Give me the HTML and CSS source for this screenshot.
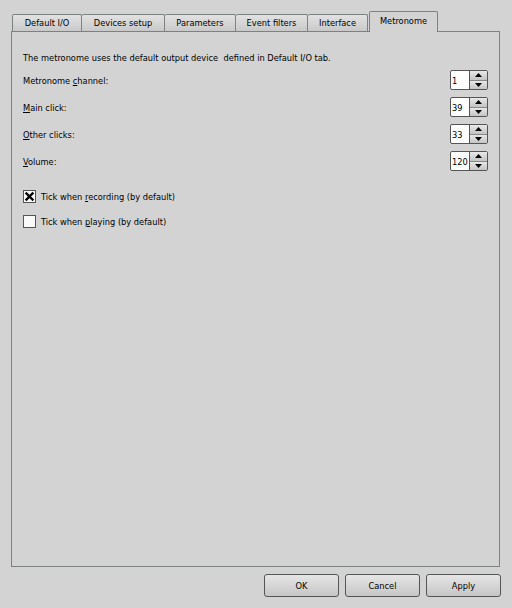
FILE: index.html
```html
<!DOCTYPE html>
<html>
<head>
<meta charset="utf-8">
<link rel="stylesheet" href="styles.css">
</head>
<body>
<div class="dialog">
  <div class="tabbar">
    <div class="tab t1">Default I/O</div>
    <div class="tab t2">Devices setup</div>
    <div class="tab t3">Parameters</div>
    <div class="tab t4">Event filters</div>
    <div class="tab t5">Interface</div>
    <div class="tab active t6">Metronome</div>
  </div>
  <div class="panel">
    <div class="info">The metronome uses the default output device&nbsp; defined in Default I/O tab.</div>
    <div class="row">
      <span class="lbl">Metronome <u>c</u>hannel:</span>
      <div class="spin"><div class="field">1</div><div class="btns"><div class="up"><svg width="7" height="4" viewBox="0 0 7 4"><path d="M0 4 L3.5 0 L7 4Z" fill="#000"/></svg></div><div class="down"><svg width="7" height="4" viewBox="0 0 7 4"><path d="M0 0 L3.5 4 L7 0Z" fill="#000"/></svg></div></div></div>
    </div>
    <div class="row">
      <span class="lbl"><u>M</u>ain click:</span>
      <div class="spin"><div class="field">39</div><div class="btns"><div class="up"><svg width="7" height="4" viewBox="0 0 7 4"><path d="M0 4 L3.5 0 L7 4Z" fill="#000"/></svg></div><div class="down"><svg width="7" height="4" viewBox="0 0 7 4"><path d="M0 0 L3.5 4 L7 0Z" fill="#000"/></svg></div></div></div>
    </div>
    <div class="row">
      <span class="lbl"><u>O</u>ther clicks:</span>
      <div class="spin"><div class="field">33</div><div class="btns"><div class="up"><svg width="7" height="4" viewBox="0 0 7 4"><path d="M0 4 L3.5 0 L7 4Z" fill="#000"/></svg></div><div class="down"><svg width="7" height="4" viewBox="0 0 7 4"><path d="M0 0 L3.5 4 L7 0Z" fill="#000"/></svg></div></div></div>
    </div>
    <div class="row">
      <span class="lbl"><u>V</u>olume:</span>
      <div class="spin"><div class="field">120</div><div class="btns"><div class="up"><svg width="7" height="4" viewBox="0 0 7 4"><path d="M0 4 L3.5 0 L7 4Z" fill="#000"/></svg></div><div class="down"><svg width="7" height="4" viewBox="0 0 7 4"><path d="M0 0 L3.5 4 L7 0Z" fill="#000"/></svg></div></div></div>
    </div>
    <div class="checks">
      <div class="check"><span class="box"><svg width="11" height="11" viewBox="0 0 11 11"><path d="M2.5 2.5 L8.5 8.5 M8.5 2.5 L2.5 8.5" stroke="#000" stroke-width="2.4" stroke-linecap="square"/></svg></span><span>Tick when <u>r</u>ecording (by default)</span></div>
      <div class="check"><span class="box"></span><span>Tick when <u>p</u>laying (by default)</span></div>
    </div>
  </div>
  <div class="buttons">
    <div class="btn">OK</div>
    <div class="btn">Cancel</div>
    <div class="btn">Apply</div>
  </div>
</div>
</body>
</html>
```
FILE: styles.css
```css
html, body {
  margin: 0;
  padding: 0;
  background: #d3d3d3;
}
body {
  width: 512px;
  height: 608px;
  overflow: hidden;
  font-family: "DejaVu Sans Condensed", "DejaVu Sans", sans-serif;
  font-size: 9.2px;
  color: #000;
}
.dialog {
  padding: 11px 0 0 11px;
}
.tabbar {
  display: flex;
  align-items: flex-end;
  height: 20px;
  padding-left: 1px;
  position: relative;
  z-index: 2;
}
.tab {
  height: 17px;
  box-sizing: border-box;
  border: 1px solid #7d8181;
  border-bottom: none;
  border-left: none;
  background: linear-gradient(#e2e2e2, #c9c9c9);
  display: flex;
  align-items: center;
  justify-content: center;
  padding-bottom: 2px;
  border-radius: 2px 2px 0 0;
}
.t1 { width: 70px; border-left: 1px solid #7d8181; }
.t2 { width: 83px; }
.t3 { width: 71px; }
.t4 { width: 72px; }
.t5 { width: 60px; }
.tab.active {
  width: 69px;
  height: 21px;
  margin-bottom: -1px;
  margin-left: 1px;
  background: #d3d3d3;
  border-left: 1px solid #7d8181;
  align-items: flex-start;
  padding-top: 3px;
  padding-bottom: 0;
}
.panel {
  width: 489px;
  height: 536px;
  box-sizing: border-box;
  border: 1px solid #7d8181;
  padding: 19px 10px 0 11px;
  display: flex;
  flex-direction: column;
}
.info {
  height: 14px;
  line-height: 14px;
  margin-bottom: 5px;
}
.row {
  display: flex;
  justify-content: space-between;
  align-items: center;
  height: 20px;
  margin-bottom: 7px;
  padding-right: 1px;
}
.spin {
  display: flex;
  width: 38px;
  height: 20px;
  box-sizing: border-box;
  border: 1px solid #555;
  border-radius: 2px;
  background: #fff;
}
.field {
  flex: 1;
  padding-left: 1px;
  display: flex;
  align-items: center;
  font-size: 9.2px;
  overflow: hidden;
}
.btns {
  width: 17px;
  flex: none;
  display: flex;
  flex-direction: column;
  border-left: 1px solid #555;
}
.up, .down {
  flex: 1;
  display: flex;
  align-items: center;
  justify-content: center;
  background: linear-gradient(#e8e8e8, #c4c4c4);
}
.up { border-bottom: 1px solid #888; }
.checks {
  margin-top: 11px;
  display: flex;
  flex-direction: column;
  gap: 11px;
}
.check {
  display: flex;
  align-items: center;
  gap: 5px;
  height: 14px;
}
.box {
  width: 13px;
  height: 13px;
  box-sizing: border-box;
  border: 1px solid #555;
  background: #fafafa;
  display: flex;
  align-items: center;
  justify-content: center;
}
.buttons {
  display: flex;
  justify-content: flex-end;
  gap: 6px;
  width: 490px;
  margin-top: 7px;
}
.btn {
  width: 75px;
  height: 23px;
  box-sizing: border-box;
  border: 1px solid #555;
  border-radius: 3px;
  background: linear-gradient(#e6e6e6, #c6c6c6);
  display: flex;
  align-items: center;
  justify-content: center;
}
```
